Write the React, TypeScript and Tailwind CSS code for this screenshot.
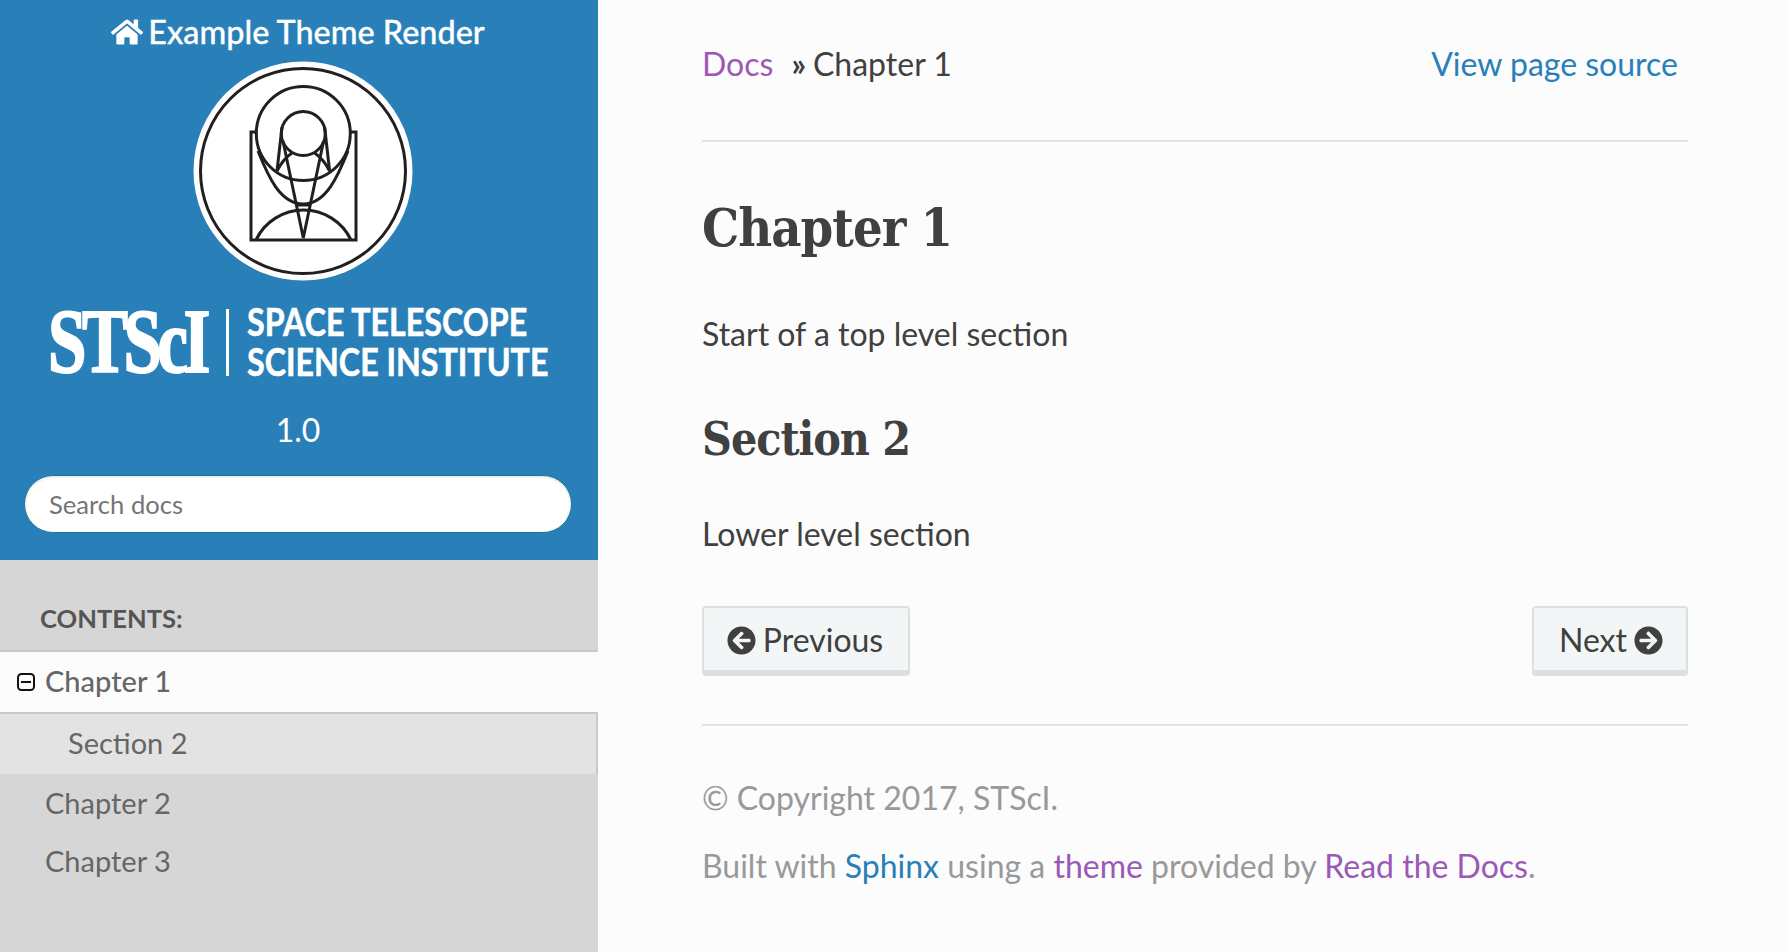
import { FaHome, FaArrowCircleLeft, FaArrowCircleRight } from "react-icons/fa"

function Emblem() {
  return (
    <svg width="240" height="240" viewBox="0 0 240 240" fill="none" stroke="#231f20" strokeWidth="3">
      <circle cx="123" cy="120" r="109.5" fill="#fff" stroke="none" />
      <circle cx="123" cy="120" r="102.5" />
      <circle cx="123.3" cy="82.5" r="47" />
      <circle cx="123.3" cy="82.5" r="22" />
      {/* frame */}
      <path d="M76 81H71V189H176V81H171" />
      {/* bottom arc */}
      <path d="M76 189A52.6 52.6 0 0 1 171 189" />
      {/* lower mirror */}
      <path d="M78 100C88 125 100 153 123.3 153C146 153 158 125 168 100" />
      {/* struts */}
      <path d="M102 76L97 120M144.6 76L149.6 120" />
      <path d="M103 90L123.3 187L143.6 90" />
      <path d="M97 120C101 112 106 106 112 102M149.6 120C145.6 112 140.6 106 134.6 102" />
      <path d="M117 154H130" />
    </svg>
  )
}

function Wordmark() {
  return (
    <svg width="520" height="85" viewBox="0 0 520 85" fill="#fff" className="overflow-visible">
      <g transform="translate(0 72) scale(0.76 1)">
        <text fontFamily="Liberation Serif" fontWeight="700" fontSize="91" letterSpacing="-6" stroke="#fff" strokeWidth="2">
          STScI
        </text>
      </g>
      <rect x="178" y="9" width="3" height="67" />
      <g transform="translate(199 36) scale(0.826 1)">
        <text fontFamily="Lato" fontWeight="700" fontSize="39" stroke="#fff" strokeWidth="0.6">
          SPACE TELESCOPE
        </text>
      </g>
      <g transform="translate(199 76) scale(0.826 1)">
        <text fontFamily="Lato" fontWeight="700" fontSize="39" stroke="#fff" strokeWidth="0.6">
          SCIENCE INSTITUTE
        </text>
      </g>
    </svg>
  )
}

function MinusBox() {
  return (
    <svg width="18" height="18" viewBox="0 0 18 18" fill="none" stroke="#111" strokeWidth="2" className="shrink-0">
      <rect x="1" y="1" width="16" height="16" rx="3.5" />
      <path d="M4 9H14" />
    </svg>
  )
}

export default function App() {
  return (
    <div className="flex h-[952px] w-full overflow-hidden bg-[#fcfcfc] font-['Lato',sans-serif] text-[#404040]">
      {/* sidebar */}
      <aside className="flex w-[598px] shrink-0 flex-col bg-[#d6d6d6]">
        <div className="flex h-[560px] flex-col items-center bg-[#2980b9] pt-[13px] text-white">
          <a className="mr-[2px] flex h-[38px] items-center gap-[5px] text-[32.4px] font-medium leading-[38px] [-webkit-text-stroke:0.3px_#fff]">
            <FaHome className="text-[32px]" />
            Example Theme Render
          </a>
          <div className="mr-[-2px]">
            <Emblem />
          </div>
          <div className="ml-[18px] mt-[9px]">
            <Wordmark />
          </div>
          <div className="mr-[2px] mt-[25px] text-[32px] leading-[40px]">1.0</div>
          <input
            placeholder="Search docs"
            className="mr-[2px] mt-[25px] h-[58px] w-[548px] rounded-[29px] border border-[#2472a4] bg-white px-[24px] text-[25.6px] text-[#404040] shadow-[inset_0_1px_3px_#ddd] outline-none placeholder:text-[#757575]"
          />
        </div>
        <div className="flex h-[90px] items-start pl-[40px] pt-[40px]">
          <span className="text-[25.6px] font-bold leading-[36px] text-[#555]">CONTENTS:</span>
        </div>
        <div className="flex h-[62px] items-center gap-[10px] border-t-2 border-[#c9c9c9] bg-[#fcfcfc] pl-[17px] text-[29px] font-medium text-[#666]">
          <MinusBox />
          <span className="mt-[-2px]">Chapter 1</span>
        </div>
        <div className="flex h-[62px] items-center border-t-2 border-r-2 border-[#c9c9c9] bg-[#e3e3e3] pb-[2px] pl-[68px] text-[29px] text-[#666]">
          Section 2
        </div>
        <div className="flex h-[58px] items-center pl-[45px] text-[29px] text-[#666]">Chapter 2</div>
        <div className="flex h-[58px] items-center pl-[45px] text-[29px] text-[#666]">Chapter 3</div>
      </aside>

      {/* main */}
      <main className="ml-[104px] flex w-[986px] flex-col">
        <div className="flex h-[142px] items-start justify-between border-b-2 border-[#e1e4e5] pt-[44px] text-[32px] leading-[40px]">
          <div className="flex">
            <a className="text-[#9b59b6]">Docs</a>
            <span className="ml-[18px] mr-[7px] font-bold">»</span>
            <span>Chapter 1</span>
          </div>
          <a className="mr-[10px] text-[#2980b9]">View page source</a>
        </div>

        <h1 className="mt-[54px] font-['DejaVu_Serif_Condensed','DejaVu_Serif',serif] text-[52px] font-bold leading-[64px] tracking-[-1px]">Chapter 1</h1>
        <p className="mt-[52px] text-[32px] leading-[44px]">Start of a top level section</p>
        <h2 className="mt-[53px] font-['DejaVu_Serif_Condensed','DejaVu_Serif',serif] text-[46px] font-bold leading-[60px] tracking-[-1px]">Section 2</h2>
        <p className="mt-[43px] text-[32px] leading-[44px]">Lower level section</p>

        <div className="mt-[50px] flex justify-between">
          <a className="flex h-[70px] w-[208px] items-center justify-center gap-[7px] rounded-[4px] border-2 border-b-[6px] border-[#dde0e1] bg-[#f3f6f6] pr-[2px] pt-[2px] text-[32px]">
            <FaArrowCircleLeft className="text-[29px]" />
            Previous
          </a>
          <a className="flex h-[70px] w-[156px] items-center justify-center gap-[7px] rounded-[4px] border-2 border-b-[6px] border-[#dde0e1] bg-[#f3f6f6] pl-[2px] pt-[2px] text-[32px]">
            Next
            <FaArrowCircleRight className="text-[29px]" />
          </a>
        </div>

        <div className="mt-[48px] border-t-2 border-[#e1e4e5] pt-[50px] text-[32px] leading-[44px] text-[#999]">
          <p>© Copyright 2017, STScI.</p>
          <p className="mt-[24px]">
            Built with <a className="text-[#2980b9]">Sphinx</a> using a <a className="text-[#9b59b6]">theme</a> provided by{" "}
            <a className="text-[#9b59b6]">Read the Docs</a>.
          </p>
        </div>
      </main>
    </div>
  )
}
